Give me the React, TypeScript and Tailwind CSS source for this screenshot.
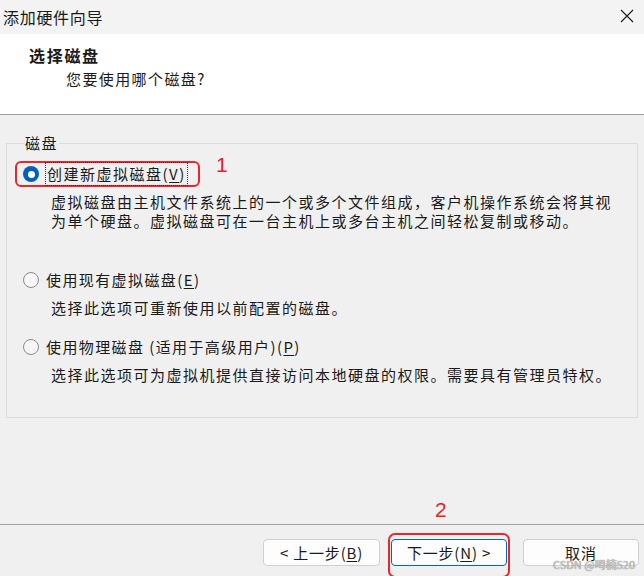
import React from 'react';

const font = { fontFamily: '"Noto Sans CJK SC", "Noto Sans", sans-serif' };

const Radio: React.FC<{ checked?: boolean }> = ({ checked }) =>
   checked ? (
      <span className="w-[16px] h-[16px] rounded-full bg-[#005fb8] flex items-center justify-center shrink-0">
         <span className="w-[7px] h-[7px] rounded-full bg-white" />
      </span>
   ) : (
      <span className="w-[16px] h-[16px] rounded-full border border-[#8a8a8a] bg-[#f7f7f7] shrink-0" />
   );

const Key: React.FC<{ k: string }> = ({ k }) => <span className="underline underline-offset-2">{k}</span>;

export default function App() {
   return (
      <div className="w-[644px] h-[576px] bg-[#f0f0f0] flex flex-col text-[#1a1a1a] relative overflow-hidden" style={font}>
         {/* title bar */}
         <div className="h-[34px] bg-[#f3f3f3] flex items-center justify-between pl-[3px] pr-[10px]">
            <span className="text-[16px] tracking-[0.7px] leading-[22px]">添加硬件向导</span>
            <svg width="14" height="14" viewBox="0 0 14 14" className="mb-[2px]">
               <path d="M1 1 L13 13 M13 1 L1 13" stroke="#1a1a1a" strokeWidth="1.1" fill="none" />
            </svg>
         </div>

         {/* header */}
         <div className="h-[81px] bg-white border-b border-[#a0a0a0] pt-[10px]">
            <div className="pl-[29px] text-[16px] font-bold tracking-[1.7px] leading-[22px]">选择磁盘</div>
            <div className="pl-[66px] mt-[2px] text-[15px] tracking-[1.4px] leading-[22px]">您要使用哪个磁盘?</div>
         </div>

         {/* body */}
         <div className="flex-1 flex flex-col px-[6px]">
            <fieldset className="mt-[18px] h-[285px] border border-[#dcdcdc] pl-[8px]">
               <legend className="ml-[9px] px-[1px] text-[15px] tracking-[1.4px] leading-[20px]">磁盘</legend>

               <div className="flex items-start mt-[8px]">
                  <div className="w-[185px] h-[26px] border-2 border-[#e8262d] rounded-[6px] flex items-center pl-[6px] gap-[6px]">
                     <Radio checked />
                     <span className="border border-dotted border-[#333] px-[1px] text-[15px] tracking-[1.5px] leading-[22px]">
                        创建新虚拟磁盘(<Key k="V" />)
                     </span>
                  </div>
                  <span className="ml-[16px] -mt-[8px] text-[21px] leading-[24px] text-[#ee1c25]" style={{ fontFamily: '"Liberation Sans", sans-serif' }}>1</span>
               </div>
               <div className="pl-[36px] mt-[5px] text-[15px] tracking-[1.5px] leading-[19px]">
                  <div>虚拟磁盘由主机文件系统上的一个或多个文件组成，客户机操作系统会将其视</div>
                  <div>为单个硬盘。虚拟磁盘可在一台主机上或多台主机之间轻松复制或移动。</div>
               </div>

               <div className="flex items-center mt-[37px] h-[26px] border-2 border-transparent pl-[6px] gap-[7px]">
                  <Radio />
                  <span className="text-[15px] tracking-[1.4px] leading-[22px]">使用现有虚拟磁盘(<Key k="E" />)</span>
               </div>
               <div className="pl-[36px] mt-[5px] text-[15px] tracking-[1.5px] leading-[19px]">选择此选项可重新使用以前配置的磁盘。</div>

               <div className="flex items-center mt-[17px] h-[26px] border-2 border-transparent pl-[6px] gap-[7px]">
                  <Radio />
                  <span className="text-[15px] tracking-[1.4px] leading-[22px]">使用物理磁盘 (适用于高级用户)(<Key k="P" />)</span>
               </div>
               <div className="pl-[36px] mt-[5px] text-[15px] tracking-[1.5px] leading-[19px]">选择此选项可为虚拟机提供直接访问本地硬盘的权限。需要具有管理员特权。</div>
            </fieldset>

            <div className="mt-auto mb-[3px] pl-[429px] text-[21px] leading-[22px] text-[#ee1c25]" style={{ fontFamily: '"Liberation Sans", sans-serif' }}>2</div>
         </div>

         {/* footer */}
         <div className="h-[52px] border-t border-[#a0a0a0] flex items-start pt-[8px] pl-[263px]">
            <button className="mt-[6px] w-[117px] h-[27px] bg-[#fdfdfd] border border-[#d0d0d0] rounded-[4px] text-[15px] tracking-[0.8px] leading-[20px]">
               &lt; 上一步(<Key k="B" />)
            </button>
            <div className="ml-[8px] w-[122px] h-[45px] border-2 border-[#e8262d] rounded-[7px] pt-[4px] px-[1px]">
               <button className="w-[116px] h-[27px] bg-[#fdfdfd] border border-[#0067c0] rounded-[4px] text-[15px] tracking-[0.8px] leading-[20px]">
                  下一步(<Key k="N" />) &gt;
               </button>
            </div>
            <button className="ml-[13px] mt-[6px] w-[116px] h-[27px] bg-[#fdfdfd] border border-[#d0d0d0] rounded-[4px] text-[15px] tracking-[1px] leading-[20px]">
               取消
            </button>
         </div>

         <span className="absolute left-[553px] top-[557px] whitespace-nowrap text-[11px] leading-[14px] text-[#c8c8c8]" style={{ textShadow: '0 0 1px #6a6a6a' }}>
            CSDN @呣楠520
         </span>
      </div>
   );
}
